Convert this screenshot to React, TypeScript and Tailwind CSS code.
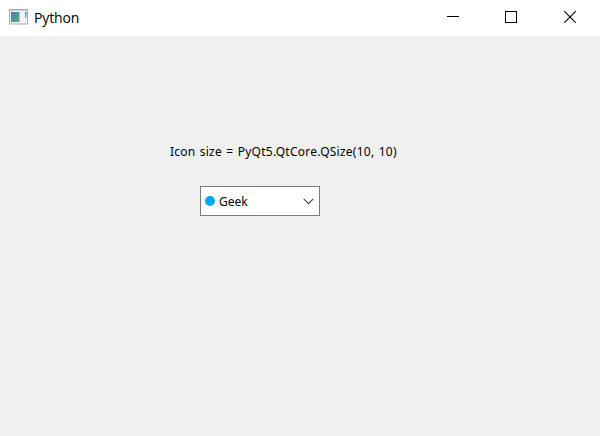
import React from 'react';

function AppIcon() {
  return (
    <svg width="20" height="16" viewBox="0 0 20 16" className="mb-0.5 shrink-0">
      <defs>
        <linearGradient id="pane" x1="0" y1="0" x2="1" y2="1">
          <stop offset="0" stopColor="#4a7db0" />
          <stop offset="1" stopColor="#56ab80" />
        </linearGradient>
        <linearGradient id="side" x1="0" y1="0" x2="0" y2="1">
          <stop offset="0" stopColor="#4a80b5" />
          <stop offset="1" stopColor="#7fc4a0" />
        </linearGradient>
      </defs>
      <rect x="0.5" y="0.5" width="18" height="14.5" fill="#f2f3f5" stroke="#a9adb1" />
      <rect x="1" y="1" width="17" height="1" fill="#c9ccd0" />
      <rect x="2" y="3" width="8.5" height="10" fill="url(#pane)" />
      <rect x="16" y="3" width="1.5" height="6" fill="url(#side)" />
    </svg>
  );
}

function WindowButtons() {
  return (
    <div className="flex gap-[46px] pr-6 pb-0.5">
      <svg width="12" height="12" shapeRendering="crispEdges">
        <rect y="5" width="12" height="1" />
      </svg>
      <svg width="12" height="12" shapeRendering="crispEdges">
        <rect x="0.5" y="0.5" width="11" height="11" fill="none" stroke="#000" />
      </svg>
      <svg width="12" height="12" className="ml-px">
        <path d="M0.3 0.3L11.7 11.7M11.7 0.3L0.3 11.7" fill="none" stroke="#000" strokeWidth="1.1" />
      </svg>
    </div>
  );
}

export default function App() {
  return (
    <div className="flex h-[436px] w-[600px] flex-col bg-[#f0f0f0] text-black">
      <header className="flex h-9 items-center justify-between bg-white pl-[9px]">
        <div className="flex items-center gap-[5px]">
          <AppIcon />
          <h1 className="font-['Open_Sans',sans-serif] text-[14px] leading-5 tracking-[-0.15px]">Python</h1>
        </div>
        <WindowButtons />
      </header>
      <main className="flex flex-col items-start pt-[106px] font-['Noto_Sans',sans-serif] text-[12px] leading-5">
        <p className="ml-[170px] tracking-[0.25px] whitespace-nowrap [word-spacing:0.9px]">
          Icon size = PyQt5.QtCore.QSize(10, 10)
        </p>
        <button className="mt-6 ml-[200px] flex h-[30px] w-[120px] items-center border border-[#7a7a7a] bg-white pl-1">
          <span className="size-[10px] rounded-full bg-[#03a5f5]" />
          <span className="ml-1 pt-0.5">Geek</span>
          <svg width="11" height="7" viewBox="0 0 11 7" className="mr-[5px] ml-auto">
            <path d="M0.7 0.8L5.5 5.6L10.3 0.8" fill="none" stroke="#444" strokeWidth="1.1" />
          </svg>
        </button>
      </main>
    </div>
  );
}
